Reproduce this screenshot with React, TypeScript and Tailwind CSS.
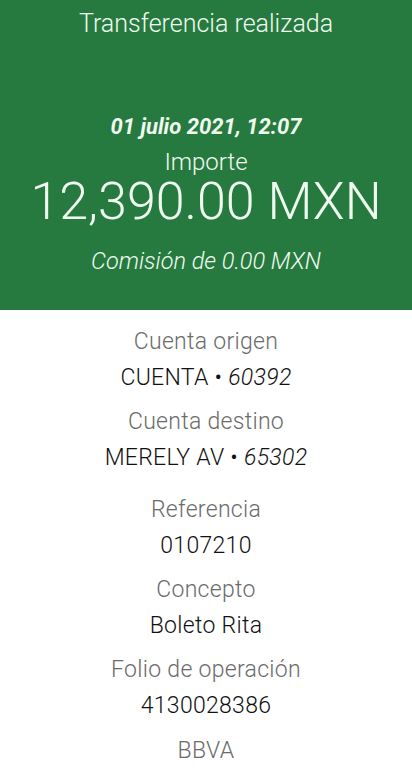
const font = { fontFamily: "Roboto, 'Noto Sans', sans-serif" };

type Row = { label: string; value: React.ReactNode; extra?: boolean };

const rows: Row[] = [
  {
    label: "Cuenta origen",
    value: (
      <>
        CUENTA • <span className="italic">60392</span>
      </>
    ),
  },
  {
    label: "Cuenta destino",
    value: (
      <>
        MERELY AV • <span className="italic">65302</span>
      </>
    ),
    extra: true,
  },
  { label: "Referencia", value: "0107210" },
  { label: "Concepto", value: "Boleto Rita" },
  { label: "Folio de operación", value: "4130028386" },
];

export default function App() {
  return (
    <div className="h-[770px] w-[412px] overflow-hidden bg-white" style={font}>
      <header className="flex h-[310px] flex-col items-center bg-[#277a3f] text-[#effbef]">
        <h1 className="h-[48px] text-[25px] font-light leading-[48px]">Transferencia realizada</h1>
        <p className="mt-[64px] h-[30px] text-[22px] font-bold italic leading-[30px]">
          01 julio 2021, 12:07
        </p>
        <p className="mt-[9px] h-[22px] text-[24px] font-light leading-[22px]">Importe</p>
        <p className="mt-[1px] h-[56px] text-[52px] font-light leading-[56px]">12,390.00 MXN</p>
        <p className="mt-[16px] h-[30px] text-[23.5px] font-light italic leading-[30px]">
          Comisión de 0.00 MXN
        </p>
      </header>

      <section className="flex flex-col items-center pt-[14px] tracking-[0.3px]">
        {rows.map((row) => (
          <div key={row.label} className={`flex flex-col items-center ${row.extra ? "pb-[8px]" : ""}`}>
            <span className="h-[36px] text-[23px] font-light leading-[36px] text-[#6b6b6b]">
              {row.label}
            </span>
            <span className="h-[44px] text-[23px] font-light leading-[36px] text-[#111]">
              {row.value}
            </span>
          </div>
        ))}
        <span className="mt-[1px] h-[36px] text-[23px] font-light leading-[36px] text-[#6b6b6b]">
          BBVA
        </span>
      </section>
    </div>
  );
}
